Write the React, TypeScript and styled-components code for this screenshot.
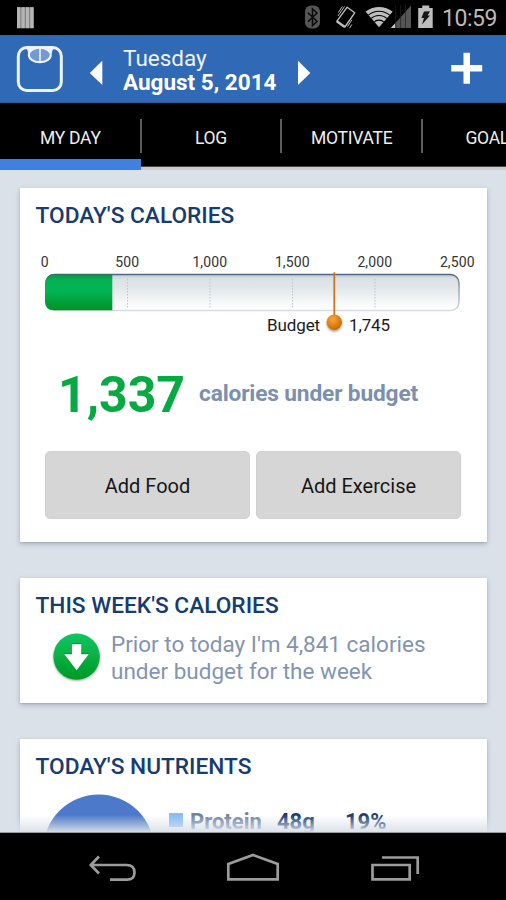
import React from "react";
import styled, { createGlobalStyle } from "styled-components";

const GlobalStyle = createGlobalStyle`
  * { box-sizing: border-box; }
  html, body { margin: 0; padding: 0; background: #000; overflow: hidden; }
  body { font-family: Roboto, "Liberation Sans", sans-serif; }
`;

const Screen = styled.div`
  width: 506px;
  height: 900px;
  display: flex;
  flex-direction: column;
  overflow: hidden;
  background: #000;
`;

const StatusBar = styled.div`
  height: 35px;
  flex: none;
  display: flex;
  justify-content: space-between;
`;

const Clock = styled.div`
  width: 64px;
  padding-top: 1px;
  font-size: 23px;
  line-height: 35px;
  letter-spacing: -0.45px;
  color: #b9b9b9;
`;

const StatusGroup = styled.div`
  display: flex;
`;

const Header = styled.header`
  height: 68px;
  flex: none;
  display: flex;
  background: #3069b5;
  border-bottom: 1px solid #2359a3;
  border-top: 1px solid #2c64ae;
`;

const DateBlock = styled.div`
  width: 165px;
  padding-top: 10px;
  color: #fff;
  font-size: 22.5px;
  line-height: 24px;
  white-space: nowrap;
`;

const Weekday = styled.div`
  color: #eef4fc;
`;

const FullDate = styled.div`
  font-weight: 700;
`;

const Tabs = styled.nav`
  height: 67px;
  flex: none;
  display: flex;
  width: 563px;
  background: #000;
`;

const Tab = styled.div<{ $active?: boolean }>`
  width: 140.67px;
  flex: none;
  height: 67px;
  padding-top: 16px;
  border-bottom: ${(p) => (p.$active ? "10px solid #4080e0" : "3px solid #ccc")};
  box-shadow: inset 0 -1px 0 ${(p) => (p.$active ? "#4080e0" : "#444")};
`;

const TabLabel = styled.div<{ $last?: boolean }>`
  height: 34px;
  line-height: 38px;
  margin-right: ${(p) => (p.$last ? "1px" : "-1px")};
  padding-left: 1px;
  text-align: center;
  font-size: 17.5px;
  letter-spacing: -0.25px;
  color: #eee;
  border-right: ${(p) => (p.$last ? "none" : "2px solid #5d5d5d")};
`;

const Content = styled.main`
  position: relative;
  height: 663px;
  flex: none;
  overflow: hidden;
  background: #dae1e9;
  padding: 18px 20px 0;
  display: flex;
  flex-direction: column;
  gap: 36px;
`;

const Card = styled.section<{ $height: number }>`
  width: 466.5px;
  height: ${(p) => p.$height}px;
  flex: none;
  background: #fff;
  padding: 0 16px;
  box-shadow: 0 2px 5px rgba(70, 85, 105, 0.32), 0 1px 1px rgba(70, 85, 105, 0.15);
`;

const CardTitle = styled.h2`
  margin: 0 0 0 -0.5px;
  padding-top: 13px;
  height: 42px;
  font-size: 22.7px;
  line-height: 30px;
  font-weight: 500;
  color: #163c70;
  white-space: nowrap;
`;

const Scale = styled.div`
  display: flex;
  width: 496px;
  margin-left: -32.5px;
  height: 40px;
  padding-top: 22px;
`;

const ScaleLabel = styled.span`
  width: 82.5px;
  flex: none;
  text-align: center;
  font-size: 14px;
  line-height: 20px;
  letter-spacing: 0.1px;
  color: #333;
`;

const GaugeSvg = styled.svg`
  display: block;
  margin-left: -2px;
`;

const BudgetRow = styled.div`
  display: flex;
  justify-content: space-between;
  width: 123px;
  height: 24px;
  margin: -20px 0 0 231px;
  font-size: 17px;
  line-height: 24px;
  letter-spacing: -0.1px;
  color: #1b1b1b;
`;

const Summary = styled.div`
  display: flex;
  height: 114px;
  padding-left: 22px;
  color: #7b8fae;
  white-space: nowrap;
`;

const BigNumber = styled.div`
  width: 141px;
  padding-top: 28px;
  font-size: 50px;
  line-height: 60px;
  font-weight: 700;
  color: #05ab42;
`;

const SummaryText = styled.div`
  padding-top: 42px;
  font-size: 22.7px;
  line-height: 30px;
  font-weight: 700;
  letter-spacing: -0.15px;
`;

const Actions = styled.div`
  display: flex;
  gap: 6px;
  margin-left: 9px;
`;

const ActionButton = styled.button`
  width: 205px;
  height: 68px;
  border: 1px solid #d0d0d0;
  border-radius: 5px;
  background: #d6d6d6;
  font-family: inherit;
  font-size: 20px;
  color: #161616;
  padding: 1px 0 0;
`;

const WeekRow = styled.div`
  display: flex;
  padding-left: 14px;
`;

const WeekText = styled.p`
  margin: 11px 0 0 7px;
  font-size: 22.5px;
  line-height: 27px;
  color: #8294b0;
  white-space: nowrap;
`;

const Nutrients = styled.div`
  display: flex;
  padding-left: 8px;
`;

const Swatch = styled.span`
  width: 14px;
  height: 14px;
  flex: none;
  margin: 32px 7px 0 15px;
  background: #85bcf2;
`;

const NutrientCell = styled.span<{ $width: number; $dark?: boolean }>`
  width: ${(p) => p.$width}px;
  padding-top: 26px;
  font-size: 22px;
  line-height: 29px;
  font-weight: 700;
  color: ${(p) => (p.$dark ? "#163c70" : "#6d81a1")};
`;

const BottomFade = styled.div`
  position: absolute;
  left: 0;
  right: 0;
  bottom: 0;
  height: 18px;
  background: linear-gradient(to bottom, rgba(218, 225, 233, 0), rgba(218, 225, 233, 0.95));
  border-bottom: 1px solid #979da4;
`;

const NavBar = styled.footer`
  height: 67px;
  flex: none;
`;

const NotificationIcon = () => (
  <svg width="60" height="35" viewBox="0 0 60 35">
    <rect x="17" y="7.2" width="16.7" height="21" fill="#777" />
    {[17, 21.4, 25.8, 30.2].map((x) => (
      <rect key={x} x={x} y="7.2" width="3.4" height="21" fill="#b5b5b5" />
    ))}
  </svg>
);

const SystemIcons = () => (
  <svg width="138" height="35" viewBox="304 0 138 35">
    <rect x="305" y="5.5" width="15" height="23" rx="6" fill="#555" />
    <path d="M308 12.7l9 8.8-4.5 4V9l4.5 4-9 8.8" fill="none" stroke="#0b0b0b" strokeWidth="1.5" />
    <g fill="none" stroke="#bcbcbc">
      <path d="M347.2 7.2l7.5 5.6-9.8 14.2-8-5.8z" strokeWidth="1.4" strokeLinejoin="round" />
      <path d="M336.8 21.3l8 5.7" strokeWidth="2.4" />
      <path d="M344.5 6.5l-6.5 9.5M342.3 6.5l-4 6M347.5 26.5l4.5-6.8M349.5 28.3l2.3-3.8" strokeWidth="1" />
    </g>
    <clipPath id="wifi">
      <path d="M379 27.3L365.5 11.4Q379 2.5 392.8 11.4z" />
    </clipPath>
    <g clipPath="url(#wifi)">
      <circle cx="379" cy="27.5" r="21" fill="#bdbdbd" />
      <g fill="none" stroke="#000" strokeWidth="1.1">
        <circle cx="379" cy="27.5" r="7.4" />
        <circle cx="379" cy="27.5" r="12" />
        <circle cx="379" cy="27.5" r="16.3" />
      </g>
    </g>
    <path d="M411 5.5V28H391z" fill="#555" />
    <path d="M395.2 23.3V28H390.8z" fill="#c7c7c7" />
    <path d="M395.7 5v23M400.6 5v23M405.5 5v23" stroke="#222" strokeWidth="0.7" />
    <path d="M422.2 5.5h7v2.4h3.5V28h-14.5V7.9h4z" fill="#bdbdbd" />
    <path d="M424 11.5l6-.3-2.4 4.2h2.4l-8 9 2-6.3h-2.6z" fill="#161616" />
  </svg>
);

const ScaleIcon = () => (
  <svg width="82" height="66" viewBox="0 36 82 66">
    <rect x="18.3" y="47.5" width="43" height="43" rx="8.5" fill="none" stroke="#eef3fb" strokeWidth="3" />
    <path d="M25 47.5h30q-3.5 1.5-4 6H29q-.5-4.5-4-6z" fill="#eef3fb" stroke="#eef3fb" />
    <ellipse cx="39.8" cy="55" rx="11" ry="7.3" fill="#729bd2" stroke="#eef3fb" strokeWidth="2" />
    <path d="M40 48v14" stroke="#eef3fb" strokeWidth="1.6" />
  </svg>
);

const PreviousIcon = () => (
  <svg width="41" height="66" viewBox="82 36 41 66">
    <path d="M102.3 60.7v24.3L89.8 72.9z" fill="#fff" />
  </svg>
);

const HeaderActions = () => (
  <svg width="218" height="66" viewBox="288 36 218 66">
    <path d="M298 60.7v24.3l12.3-12.1z" fill="#fff" />
    <path d="M463.5 52.8h6.5v12.2h12.2v6.5H470v12.3h-6.5V71.5h-12.2V65h12.2z" fill="#fff" />
  </svg>
);

const CalorieGauge = () => (
  <GaugeSvg width="430" height="63" viewBox="34 270 430 63">
    <defs>
      <linearGradient id="track" x1="0" y1="0" x2="0" y2="1">
        <stop offset="0" stopColor="#c2cad0" />
        <stop offset="0.12" stopColor="#dae1e4" />
        <stop offset="0.35" stopColor="#e1e6e9" />
        <stop offset="0.75" stopColor="#f5f7f8" />
        <stop offset="1" stopColor="#fff" />
      </linearGradient>
      <linearGradient id="rim" x1="0" y1="0" x2="0" y2="1">
        <stop offset="0" stopColor="#4e6782" />
        <stop offset="0.35" stopColor="#91a2b4" />
        <stop offset="1" stopColor="#d6dce2" />
      </linearGradient>
      <linearGradient id="fill" x1="0" y1="0" x2="0" y2="1">
        <stop offset="0" stopColor="#079a45" />
        <stop offset="0.15" stopColor="#05b153" />
        <stop offset="0.45" stopColor="#00b655" />
        <stop offset="1" stopColor="#019125" />
      </linearGradient>
      <radialGradient id="knob" cx="0.4" cy="0.3" r="0.7">
        <stop offset="0" stopColor="#faa743" />
        <stop offset="0.6" stopColor="#df8011" />
        <stop offset="1" stopColor="#c86a00" />
      </radialGradient>
      <filter id="knobShadow" x="-50%" y="-50%" width="200%" height="200%">
        <feDropShadow dx="0" dy="1.5" stdDeviation="1" floodOpacity="0.4" />
      </filter>
    </defs>
    <rect x="45.7" y="274.5" width="413.3" height="36" rx="8.5" fill="url(#track)" stroke="url(#rim)" strokeWidth="1.5" />
    <path d="M127.5 279v30M210 279v30M292.5 279v30M375 279v30" stroke="#bcc6ce" strokeWidth="1" strokeDasharray="1.5 1.5" />
    <path d="M112.3 275v35.2H54q-9 0-9-9V284q0-9 9-9z" fill="url(#fill)" />
    <path d="M47.5 277.5q2.5-3 6.5-3h58" fill="none" stroke="#2f7266" strokeWidth="1" />
    <path d="M334.3 272.3v43" stroke="#ce751a" strokeWidth="1.8" />
    <circle cx="334.3" cy="322.3" r="7.7" fill="url(#knob)" filter="url(#knobShadow)" />
  </GaugeSvg>
);

const DownBadge = () => (
  <svg width="54" height="66" viewBox="50 620 54 66">
    <defs>
      <linearGradient id="badge" x1="0" y1="0" x2="0" y2="1">
        <stop offset="0" stopColor="#0bc663" />
        <stop offset="1" stopColor="#039923" />
      </linearGradient>
      <filter id="badgeShadow" x="-20%" y="-20%" width="140%" height="140%">
        <feDropShadow dx="0" dy="1" stdDeviation="1" floodOpacity="0.4" />
      </filter>
    </defs>
    <circle cx="76.6" cy="656.6" r="23.2" fill="url(#badge)" filter="url(#badgeShadow)" />
    <path d="M72 643.7h9.2v10H89L76.6 670.2 64 653.7h8z" fill="#fff" />
    <path d="M72 643.7h9.2M64 653.7h8M81.2 653.7H89" stroke="#048735" strokeWidth="1" />
  </svg>
);

const PieTop = () => (
  <svg width="110" height="54" viewBox="44 781 110 54">
    <circle cx="98.7" cy="850" r="55.5" fill="#4d79ca" />
  </svg>
);

const NavigationIcons = () => (
  <svg width="506" height="67" viewBox="0 833 506 67" fill="none" stroke="#9c9c9c" strokeWidth="2.7">
    <path d="M99 856.5l-8.2 8.5 8.2 8.500M91 865h35.500q8 0 8 7.500t-8 7.200H110" />
    <path d="M228.300 864l24.700-9 24.700 9v15.300h-49.400z" />
    <path d="M372.500 865h37.200v14.400h-37.200zM382 857.500h35.700V874" />
  </svg>
);

const scaleValues = ["0", "500", "1,000", "1,500", "2,000", "2,500"];

export default function App() {
  return (
    <Screen>
      <GlobalStyle />
      <StatusBar>
        <NotificationIcon />
        <StatusGroup>
          <SystemIcons />
          <Clock>10:59</Clock>
        </StatusGroup>
      </StatusBar>
      <Header>
        <ScaleIcon />
        <PreviousIcon />
        <DateBlock>
          <Weekday>Tuesday</Weekday>
          <FullDate>August 5, 2014</FullDate>
        </DateBlock>
        <HeaderActions />
      </Header>
      <Tabs>
        <Tab $active><TabLabel>MY DAY</TabLabel></Tab>
        <Tab><TabLabel>LOG</TabLabel></Tab>
        <Tab><TabLabel>MOTIVATE</TabLabel></Tab>
        <Tab><TabLabel $last>GOALS</TabLabel></Tab>
      </Tabs>
      <Content>
        <Card $height={353.5}>
          <CardTitle>TODAY'S CALORIES</CardTitle>
          <Scale>
            {scaleValues.map((value) => (
              <ScaleLabel key={value}>{value}</ScaleLabel>
            ))}
          </Scale>
          <CalorieGauge />
          <BudgetRow>
            <span>Budget</span>
            <span>1,745</span>
          </BudgetRow>
          <Summary>
            <BigNumber>1,337</BigNumber>
            <SummaryText>calories under budget</SummaryText>
          </Summary>
          <Actions>
            <ActionButton>Add Food</ActionButton>
            <ActionButton>Add Exercise</ActionButton>
          </Actions>
        </Card>
        <Card $height={125}>
          <CardTitle>THIS WEEK'S CALORIES</CardTitle>
          <WeekRow>
            <DownBadge />
            <WeekText>
              Prior to today I'm 4,841 calories
              <br />
              under budget for the week
            </WeekText>
          </WeekRow>
        </Card>
        <Card $height={200}>
          <CardTitle>TODAY'S NUTRIENTS</CardTitle>
          <Nutrients>
            <PieTop />
            <Swatch />
            <NutrientCell $width={87}>Protein</NutrientCell>
            <NutrientCell $width={68} $dark>48g</NutrientCell>
            <NutrientCell $width={60} $dark>19%</NutrientCell>
          </Nutrients>
        </Card>
        <BottomFade />
      </Content>
      <NavBar>
        <NavigationIcons />
      </NavBar>
    </Screen>
  );
}
